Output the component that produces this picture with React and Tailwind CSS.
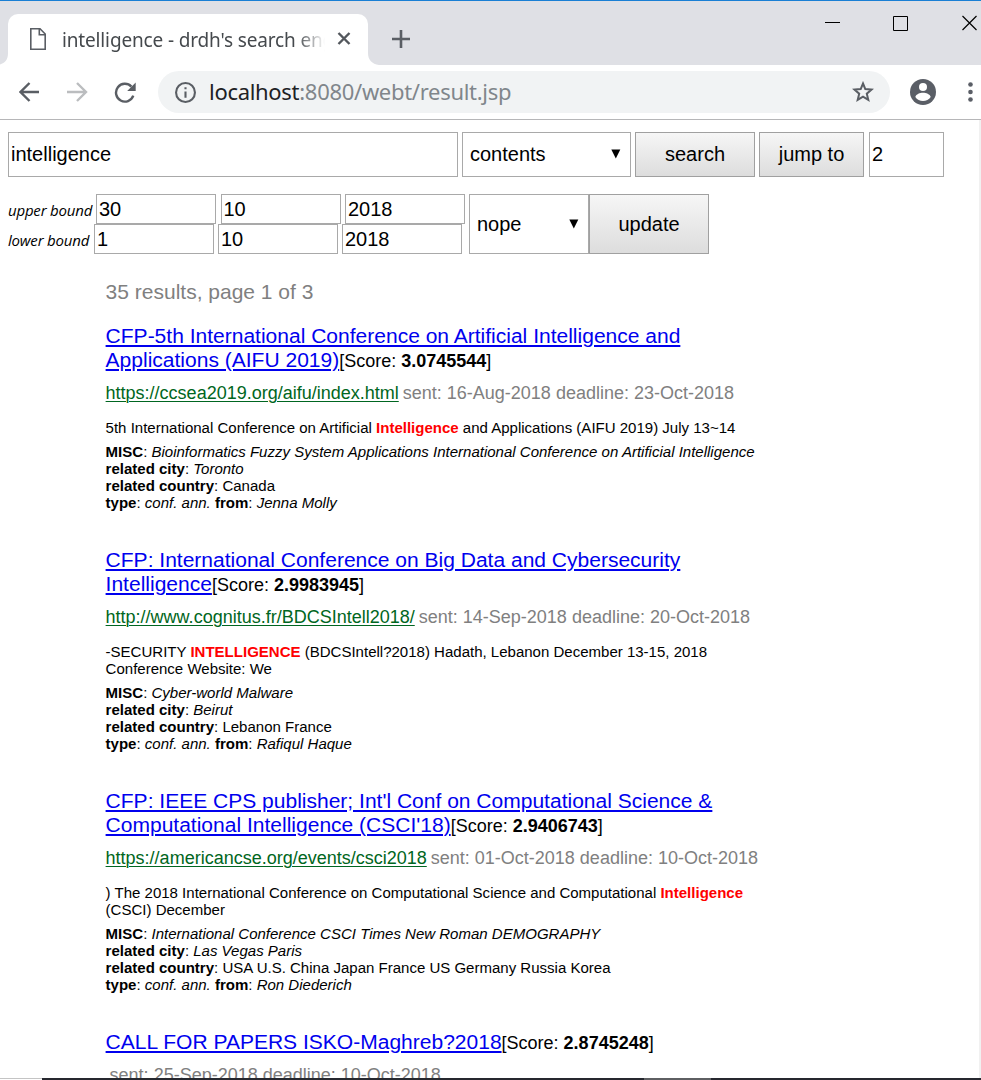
const results = [
  {
    title: ["CFP-5th International Conference on Artificial Intelligence and", "Applications (AIFU 2019)"],
    score: "3.0745544",
    url: "https://ccsea2019.org/aifu/index.html",
    sent: "16-Aug-2018",
    deadline: "23-Oct-2018",
    snippet: [["5th International Conference on Artificial ", "Intelligence", " and Applications (AIFU 2019) July 13~14"]],
    misc: "Bioinformatics Fuzzy System Applications International Conference on Artificial Intelligence",
    city: "Toronto",
    country: "Canada",
    from: "Jenna Molly",
  },
  {
    title: ["CFP: International Conference on Big Data and Cybersecurity", "Intelligence"],
    score: "2.9983945",
    url: "http://www.cognitus.fr/BDCSIntell2018/",
    sent: "14-Sep-2018",
    deadline: "20-Oct-2018",
    snippet: [["-SECURITY ", "INTELLIGENCE", " (BDCSIntell?2018) Hadath, Lebanon December 13-15, 2018"], ["Conference Website: We"]],
    misc: "Cyber-world Malware",
    city: "Beirut",
    country: "Lebanon France",
    from: "Rafiqul Haque",
  },
  {
    title: ["CFP: IEEE CPS publisher; Int'l Conf on Computational Science &", "Computational Intelligence (CSCI'18)"],
    score: "2.9406743",
    url: "https://americancse.org/events/csci2018",
    sent: "01-Oct-2018",
    deadline: "10-Oct-2018",
    snippet: [[") The 2018 International Conference on Computational Science and Computational ", "Intelligence"], ["(CSCI) December"]],
    misc: "International Conference CSCI Times New Roman DEMOGRAPHY",
    city: "Las Vegas Paris",
    country: "USA U.S. China Japan France US Germany Russia Korea",
    from: "Ron Diederich",
  },
  {
    title: ["CALL FOR PAPERS ISKO-Maghreb?2018"],
    score: "2.8745248",
    sent: "25-Sep-2018",
    deadline: "10-Oct-2018",
  },
];

function TitleBar() {
  return (
    <div className="flex h-[65px] shrink-0 items-start border-t border-[#1a7fd4] bg-[#dfe0e5]">
      <div className="flex h-full w-2 items-end">
        <svg width="8" height="12" viewBox="0 0 8 12"><path d="M8 0C8 7 5 10 0 11.500V12H8Z" fill="#fff" /></svg>
      </div>
      <div className="mt-[13px] flex h-[51px] w-[360px] items-center rounded-t-[10px] bg-white">
        <svg className="-mt-[2px] ml-[22px] shrink-0" width="16" height="22" viewBox="0 0 16 22" fill="none" stroke="#5a5e64" strokeWidth="1.6">
          <path d="M.8.8H10L15.200 6V21.200H.8Z" />
          <path d="M9.300.8V6.700H15.200" />
        </svg>
        <div className="ml-4 w-[263px] overflow-hidden whitespace-nowrap font-['Noto_Sans',sans-serif] text-[19px] leading-[28px] tracking-[-0.15px] text-[#45494d] [mask-image:linear-gradient(to_right,black_235px,transparent_263px)]">
          intelligence - drdh's search engine
        </div>
        <svg className="-mt-[2px] ml-[12px] shrink-0" width="14" height="13" viewBox="0 0 14 13" stroke="#53575d" strokeWidth="2.400"><path d="M1.500 1 12.500 12M12.500 1 1.500 12" /></svg>
      </div>
      <div className="flex h-full w-2 items-end">
        <svg width="12" height="12" viewBox="0 0 12 12" className="shrink-0"><path d="M0 0C0 7 4 11 11 12H0Z" fill="#fff" /></svg>
      </div>
      <svg className="ml-4 mt-[29px] shrink-0" width="18" height="18" viewBox="0 0 18 18" stroke="#5a5e64" strokeWidth="2.600"><path d="M9 0V18M0 9H18" /></svg>
      <div className="ml-auto flex">
        <svg className="mt-[14px]" width="156" height="17" viewBox="0 0 156 17" fill="none" stroke="#000">
          <path d="M0 7.500H15" />
          <path d="M68.500 1.500H82.500V15.500H68.500Z" />
          <path d="M137.500 1 151.500 15M151.500 1 137.500 15" strokeWidth="1.200" />
        </svg>
      </div>
    </div>
  );
}

function Toolbar() {
  return (
    <div className="flex h-[55px] shrink-0 items-center border-b border-[#b6b6b8] bg-white">
      <svg className="ml-[19px]" width="21" height="20" viewBox="0 0 21 20" fill="none" stroke="#5a5e64" strokeWidth="2.400"><path d="M20 10H2M10.500 1 1.500 10 10.500 19" /></svg>
      <svg className="ml-[27px]" width="21" height="20" viewBox="0 0 21 20" fill="none" stroke="#bbbdbf" strokeWidth="2.400"><path d="M0 10H18M10 1 19 10 10 19" /></svg>
      <svg className="ml-[26px]" width="22" height="21" viewBox="0 0 22 21" fill="none" stroke="#5a5e64" strokeWidth="2.400">
        <path d="M19.300 13.700A8.900 8.900 0 1 1 17.400 4.600" />
        <path d="M21.700 .5V9H13.200Z" fill="#5a5e64" stroke="none" />
      </svg>
      <div className="ml-[22px] flex h-[42px] w-[732px] items-center rounded-full bg-[#f1f3f4]">
        <svg className="ml-[17px]" width="21" height="21" viewBox="0 0 20 20" fill="none" stroke="#5a5e64" strokeWidth="2"><circle cx="10" cy="10" r="9" /><path d="M10 9V15M10 5V7" /></svg>
        <span className="-mt-[2px] ml-[13px] whitespace-nowrap font-['Noto_Sans',sans-serif] text-[22px] leading-[30px] tracking-[-0.3px] text-[#80868b]">
          <span className="text-[#202124]">localhost</span>:8080/webt/result.jsp
        </span>
        <svg className="ml-auto mr-4" width="22" height="22" viewBox="0 0 22 22" fill="none" stroke="#5a5e64" strokeWidth="2"><path d="M11 2.500 13.300 8.100 19.600 8.600 14.800 12.700 16.300 18.900 11 15.600 5.700 18.900 7.200 12.700 2.400 8.600 8.700 8.100Z" /></svg>
      </div>
      <svg className="ml-5" width="26" height="26" viewBox="0 0 26 26">
        <circle cx="13" cy="13" r="13" fill="#5a5e66" />
        <circle cx="13" cy="8" r="4" fill="#fff" />
        <path d="M5.300 18C6 15.200 10 13.800 13 13.800S20 15.200 20.700 18A9.300 9.300 0 0 1 5.300 18Z" fill="#fff" />
      </svg>
      <svg className="ml-[32px]" width="5" height="20" viewBox="0 0 5 20" fill="#5a5e66"><circle cx="2.500" cy="2.500" r="2.300" /><circle cx="2.500" cy="10" r="2.300" /><circle cx="2.500" cy="17.500" r="2.300" /></svg>
    </div>
  );
}

const inputBox = "block border border-[#a9a9a9] bg-white pl-[2px] text-[20px] text-black outline-none";
const buttonBox = "border border-[#a0a0a0] bg-linear-to-b from-[#f6f6f6] to-[#dddddd] text-[20px] text-black";

function Select({ value, className }) {
  return (
    <div className={`flex items-center justify-between border border-[#a9a9a9] bg-white pl-[7px] pr-[9px] text-[20px] ${className}`}>
      <span>{value}</span>
      <svg width="10" height="10" viewBox="0 0 10 10"><path d="M.3.5H9.300L4.800 9.500Z" fill="#000" /></svg>
    </div>
  );
}

function Bound({ label, labelClass, gapClass, values }) {
  return (
    <div className="flex items-center">
      <span className={`shrink-0 whitespace-nowrap pt-px font-['Open_Sans',sans-serif] text-[15px] leading-[20px] tracking-[-0.2px] italic ${labelClass}`}>{label}</span>
      <div className={`flex ${gapClass}`}>
        {values.map((v, i) => (
          <input key={i} className={`${inputBox} h-[30px] w-[120px]`} defaultValue={v} />
        ))}
      </div>
    </div>
  );
}

function SearchForm() {
  return (
    <div className="pl-2 pt-3">
      <div className="flex h-[45px]">
        <input className={`${inputBox} w-[450px] pb-[2px]`} defaultValue="intelligence" />
        <Select value="contents" className="ml-1 w-[169px] pb-[2px]" />
        <button className={`${buttonBox} ml-1 w-[120px] pb-[2px]`}>search</button>
        <button className={`${buttonBox} ml-1 w-[105px] pb-[2px]`}>jump to</button>
        <input className={`${inputBox} ml-[5px] w-[75px] pb-[2px]`} defaultValue="2" />
      </div>
      <div className="mt-[17px] flex h-[60px]">
        <div className="w-[461px]">
          <Bound label="upper bound" labelClass="w-[88px]" gapClass="gap-[4.500px]" values={["30", "10", "2018"]} />
          <Bound label="lower bound" labelClass="w-[86px]" gapClass="gap-1" values={["1", "10", "2018"]} />
        </div>
        <Select value="nope" className="w-[120px]" />
        <button className={`${buttonBox} w-[120px]`}>update</button>
      </div>
    </div>
  );
}

function Result({ r }) {
  return (
    <article className="mb-[37px] whitespace-nowrap">
      <h3 className="leading-[24px]">
        {r.title.map((line, i) => (
          <div key={i} className="h-6">
            <a className="text-[21.020px] text-[#0000ee] underline decoration-2 underline-offset-2">{line}</a>
            {i === r.title.length - 1 && (
              <span className="text-[18px]">[Score: <b>{r.score}</b>]</span>
            )}
          </div>
        ))}
      </h3>
      <p className="mt-[11px] h-5 text-[18px] leading-[20px] text-[#808080]">
        {r.url && <a className="text-[#006621] underline decoration-1 underline-offset-2">{r.url}</a>}
        <span className="ml-1">sent: {r.sent} deadline: {r.deadline}</span>
      </p>
      {r.snippet && (
        <div className="text-[15.020px] leading-[17px]">
          <div className="mt-4">
            {r.snippet.map((line, i) => (
              <p key={i}>{line[0]}{line[1] && <b className="text-[#ff0000]">{line[1]}</b>}{line[2]}</p>
            ))}
          </div>
          <div className="mt-[7px]">
            <p><b>MISC</b>: <i>{r.misc}</i></p>
            <p><b>related city</b>: <i>{r.city}</i></p>
            <p><b>related country</b>: {r.country}</p>
            <p><b>type</b>: <i>conf. ann.</i> <b>from</b>: <i>{r.from}</i></p>
          </div>
        </div>
      )}
    </article>
  );
}

export default function App() {
  return (
    <div className="flex h-[1080px] w-[981px] flex-col overflow-hidden bg-white font-['Liberation_Sans',Arial,sans-serif] text-black">
      <TitleBar />
      <Toolbar />
      <main className="min-h-0 flex-1 overflow-hidden border-r-2 border-[#f1f1f1]">
        <SearchForm />
        <div className="ml-[105.600px] mt-[26px]">
          <p className="mb-5 text-[21px] leading-[24px] text-[#808080]">35 results, page 1 of 3</p>
          {results.map((r) => <Result key={r.score} r={r} />)}
        </div>
      </main>
      <footer className="flex h-[2px] shrink-0 bg-[#26282f]">
        <div className="w-[42px] border-t border-[#c4c4c4] bg-white" />
        <div className="ml-[602px] w-[67px] bg-[#5e5f62]" />
      </footer>
    </div>
  );
}
